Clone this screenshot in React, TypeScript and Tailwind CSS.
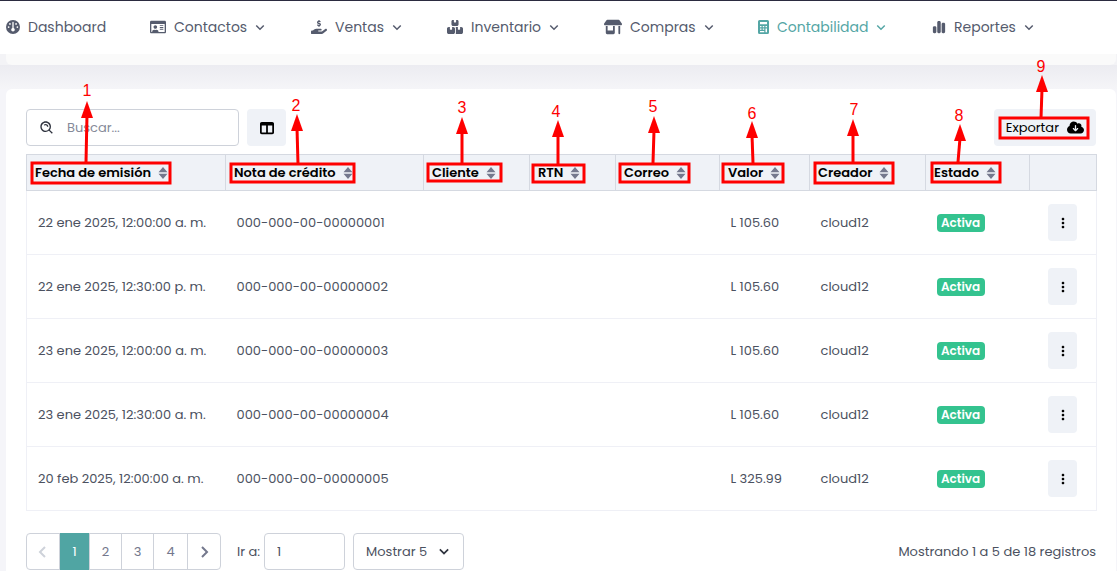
import { ReactNode } from 'react';
import {
  FaBoxesStacked,
  FaChartSimple,
  FaCloudArrowDown,
  FaGauge,
  FaHandHoldingDollar,
  FaShop,
  FaTableColumns,
} from 'react-icons/fa6';
import { FaRegIdCard } from 'react-icons/fa';
import {
  BiChevronDown,
  BiChevronLeft,
  BiChevronRight,
  BiDotsVerticalRounded,
  BiSearchAlt,
} from 'react-icons/bi';

interface NavEntry {
  label: string;
  icon: ReactNode;
  hasMenu: boolean;
  active?: boolean;
}

const CalculatorIcon = () => {
  return (
    <svg width="11" height="14" viewBox="0 0 11 14" fill="currentColor">
      <path
        fillRule="evenodd"
        d="M1.5 0h8Q11 0 11 1.5v11Q11 14 9.5 14h-8Q0 14 0 12.500v-11Q0 0 1.5 0ZM2 2v2.200h7V2ZM2 6v1.300h1.500V6ZM4.750 6v1.300h1.500V6ZM7.500 6v1.300H9V6ZM2 8.500v1.300h1.500V8.500ZM4.750 8.500v1.300h1.500V8.500ZM7.500 8.500v3.700H9V8.500ZM2 11v1.200h4.250V11Z"
      />
    </svg>
  );
};

const navItems: NavEntry[] = [
  { label: 'Dashboard', icon: <FaGauge size={14} />, hasMenu: false },
  { label: 'Contactos', icon: <FaRegIdCard size={16} />, hasMenu: true },
  { label: 'Ventas', icon: <FaHandHoldingDollar size={16} />, hasMenu: true },
  { label: 'Inventario', icon: <FaBoxesStacked size={16} />, hasMenu: true },
  { label: 'Compras', icon: <FaShop size={18} />, hasMenu: true },
  { label: 'Contabilidad', icon: <CalculatorIcon />, hasMenu: true, active: true },
  { label: 'Reportes', icon: <FaChartSimple size={14} />, hasMenu: true },
];

const columns = [
  { label: 'Fecha de emisión', width: 'w-[199px]' },
  { label: 'Nota de crédito', width: 'w-[198px]' },
  { label: 'Cliente', width: 'w-[106px]' },
  { label: 'RTN', width: 'w-[86px]' },
  { label: 'Correo', width: 'w-[104px]' },
  { label: 'Valor', width: 'w-[90px]' },
  { label: 'Creador', width: 'w-[116px]' },
  { label: 'Estado', width: 'w-[104px]' },
];

const rows = [
  { date: '22 ene 2025, 12:00:00 a. m.', note: '000-000-00-00000001', value: 'L 105.60' },
  { date: '22 ene 2025, 12:30:00 p. m.', note: '000-000-00-00000002', value: 'L 105.60' },
  { date: '23 ene 2025, 12:00:00 a. m.', note: '000-000-00-00000003', value: 'L 105.60' },
  { date: '23 ene 2025, 12:30:00 a. m.', note: '000-000-00-00000004', value: 'L 105.60' },
  { date: '20 feb 2025, 12:00:00 a. m.', note: '000-000-00-00000005', value: 'L 325.99' },
];

// box: x, y, width, height - line: from x, from y, tip x, tip y - label: x, baseline
const callouts = [
  { box: [32, 163, 138, 20], line: [86, 162, 87, 101], label: [87, 96] },
  { box: [231, 164, 123, 18], line: [298, 164, 297, 114], label: [296, 111] },
  { box: [428, 164, 73, 17], line: [462, 163, 462, 117], label: [462, 113] },
  { box: [533, 165, 51, 17], line: [558, 165, 558, 120], label: [556, 117] },
  { box: [620, 164, 69, 18], line: [653, 163, 654, 116], label: [653, 112] },
  { box: [723, 164, 60, 18], line: [753, 163, 752, 121], label: [752, 119] },
  { box: [815, 163, 78, 20], line: [853, 162, 853, 119], label: [854, 115] },
  { box: [932, 163, 68, 19], line: [958, 162, 960, 124], label: [959, 121] },
  { box: [1000, 118, 88, 20], line: [1041, 118, 1042, 75], label: [1041, 72] },
];

const App = () => {
  return (
    <div className="relative flex h-screen flex-col overflow-hidden bg-[#f5f5f9] font-['Poppins','Inter',sans-serif] text-[13px] text-[#4b5160]">
      <Header />
      <div className="bg-[#f3f3f6] pr-px pl-1.5">
        <div className="h-[11px] rounded-b-md bg-[#fafafa]"></div>
      </div>
      <div className="h-6 shrink-0 bg-linear-to-b from-[#ececf1] to-[#f5f5f8]"></div>
      <main className="mr-px ml-1.5 flex-1 rounded-t-md bg-white px-5 pt-5">
        <Toolbar />
        <CreditNotesTable />
        <Pagination />
      </main>
      <Callouts />
    </div>
  );
};
export default App;

const Header = () => {
  return (
    <header className="h-[54px] shrink-0 border-t border-[#2b2b40] bg-white">
      <nav className="grid h-full grid-cols-[144fr_161fr_136fr_157fr_154fr_174fr_185fr] items-center pb-0.5 pl-1.5">
        {navItems.map((item) => (
          <NavItem key={item.label} {...item} />
        ))}
      </nav>
    </header>
  );
};

const NavItem = ({ label, icon, hasMenu, active }: NavEntry) => {
  return (
    <a
      href="#"
      className={`flex items-center text-sm ${active ? 'text-[#54a6a5]' : 'text-[#555b6d]'}`}
    >
      {icon}
      <span className="ml-2">{label}</span>
      {hasMenu && <BiChevronDown size={18} className="ml-1" />}
    </a>
  );
};

const Toolbar = () => {
  return (
    <div className="flex items-center justify-between">
      <div className="flex gap-2">
        <label className="flex h-[37px] w-[213px] items-center gap-3 rounded border border-[#ced2da] px-3">
          <BiSearchAlt size={16} className="shrink-0 text-[#30343f]" />
          <input
            type="text"
            aria-label="Buscar"
            placeholder="Buscar..."
            className="w-full min-w-0 outline-none placeholder:text-[#858a99]"
          />
        </label>
        <button
          type="button"
          aria-label="Columnas"
          className="flex h-[37px] w-[39px] items-center justify-center rounded bg-[#eff2f7] text-black"
        >
          <FaTableColumns size={14} />
        </button>
      </div>
      <button
        type="button"
        className="flex h-[37px] items-center gap-2 rounded bg-[#eff2f7] px-3 text-black"
      >
        Exportar
        <FaCloudArrowDown size={17} />
      </button>
    </div>
  );
};

const SortIcon = () => {
  return (
    <svg width="10" height="12" viewBox="0 0 10 12" fill="#74788d" className="shrink-0">
      <path d="M5 0 9.500 5.200H.5ZM.5 6.800h9L5 12Z" />
    </svg>
  );
};

const CreditNotesTable = () => {
  return (
    <table className="mt-2 w-full table-fixed border-collapse border border-[#eff0f6] text-left">
      <thead className="bg-[#eff2f7] text-black">
        <tr className="h-9">
          {columns.map((column) => (
            <th
              key={column.label}
              className={`${column.width} border border-[#d5d9e1] px-2 font-semibold whitespace-nowrap`}
            >
              <button type="button" className="flex items-center gap-[7px]">
                {column.label}
                <SortIcon />
              </button>
            </th>
          ))}
          <th aria-label="Acciones" className="w-[67px] border border-[#d5d9e1]"></th>
        </tr>
      </thead>
      <tbody>
        {rows.map((row) => (
          <tr key={row.note} className="border-b border-[#eff0f6]">
            <td className="px-[11px] whitespace-nowrap">{row.date}</td>
            <td className="px-[11px] whitespace-nowrap">{row.note}</td>
            <td></td>
            <td></td>
            <td></td>
            <td className="px-[11px] whitespace-nowrap">{row.value}</td>
            <td className="px-[11px]">cloud12</td>
            <td className="px-[11px]">
              <span className="block w-12 rounded bg-[#34c38f] text-center text-xs leading-[18px] font-semibold text-white">
                Activa
              </span>
            </td>
            <td className="py-[13px]">
              <button
                type="button"
                aria-label="Opciones"
                className="mx-auto flex h-[37px] w-[29px] items-center justify-center rounded bg-[#eff2f7] text-black"
              >
                <BiDotsVerticalRounded size={16} />
              </button>
            </td>
          </tr>
        ))}
      </tbody>
    </table>
  );
};

const Pagination = () => {
  return (
    <div className="mt-[22px] flex items-center justify-between">
      <div className="flex items-center">
        <div className="flex h-[37px] w-[195px] divide-x divide-[#ced2da] rounded border border-[#ced2da] text-[#74788d]">
          <button
            type="button"
            aria-label="Anterior"
            disabled
            className="flex flex-1 items-center justify-center text-[#ced2da]"
          >
            <BiChevronLeft size={24} />
          </button>
          <button type="button" className="-my-px w-[30px] bg-[#50a5a3] text-white">
            1
          </button>
          <button type="button" className="w-8">
            2
          </button>
          <button type="button" className="w-8">
            3
          </button>
          <button type="button" className="w-[34px]">
            4
          </button>
          <button
            type="button"
            aria-label="Siguiente"
            className="flex flex-1 items-center justify-center"
          >
            <BiChevronRight size={24} />
          </button>
        </div>
        <label className="ml-4 flex items-center gap-1">
          Ir a:
          <input
            type="text"
            defaultValue="1"
            className="h-[37px] w-[81px] rounded border border-[#ced2da] px-3 outline-none"
          />
        </label>
        <div className="relative ml-2">
          <select
            aria-label="Registros por página"
            className="h-[37px] w-[111px] appearance-none rounded border border-[#ced2da] bg-white px-3"
          >
            <option>Mostrar 5</option>
            <option>Mostrar 10</option>
            <option>Mostrar 20</option>
          </select>
          <BiChevronDown
            size={20}
            className="pointer-events-none absolute top-2 right-2.5 text-[#30343f]"
          />
        </div>
      </div>
      <p>Mostrando 1 a 5 de 18 registros</p>
    </div>
  );
};

const Callouts = () => {
  return (
    <svg
      width="1117"
      height="200"
      viewBox="0 0 1117 200"
      fill="none"
      stroke="#fe0000"
      strokeWidth="3"
      className="pointer-events-none absolute top-0 left-0"
    >
      {callouts.map(({ box, line, label }, index) => (
        <g key={index}>
          <rect x={box[0]} y={box[1]} width={box[2]} height={box[3]} />
          <path d={`M${line[0]} ${line[1]}L${line[2]} ${line[3] + 14}`} />
          <path
            d={`M${line[2]} ${line[3]}l6 17h-12z`}
            fill="#fe0000"
            stroke="none"
          />
          <text
            x={label[0]}
            y={label[1]}
            textAnchor="middle"
            fill="#fe0000"
            stroke="none"
            className="font-['Liberation_Sans',sans-serif] text-base"
          >
            {index + 1}
          </text>
        </g>
      ))}
    </svg>
  );
};
